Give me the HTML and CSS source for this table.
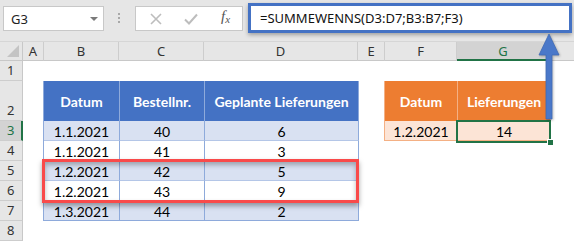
FILE: index.html
```html
<!DOCTYPE html>
<html>
<head>
<meta charset="utf-8">
<link rel="stylesheet" href="styles.css">
</head>
<body>
<div class="app">
  <div class="toolbar">
    <div class="namebox"><span>G3</span><span class="dd"></span></div>
    <div class="dots"><i></i><i></i><i></i></div>
    <div class="fbtns">
      <svg class="ic-x" width="14" height="14" viewBox="0 0 14 14"><path d="M2 2L12 12M12 2L2 12" stroke="#bdbdbd" stroke-width="1.6" fill="none"/></svg>
      <svg class="ic-ok" width="16" height="14" viewBox="0 0 16 14"><path d="M2 7.5L6 11.5L14 2.5" stroke="#bdbdbd" stroke-width="2" fill="none"/></svg>
      <span class="fx">f<sub>x</sub></span>
    </div>
    <div class="formula">=SUMMEWENNS(D3:D7;B3:B7;F3)</div>
  </div>
  <div class="sheet">
    <div class="corner"></div>
    <div class="ch">A</div>
    <div class="ch">B</div>
    <div class="ch">C</div>
    <div class="ch">D</div>
    <div class="ch">E</div>
    <div class="ch">F</div>
    <div class="ch sel">G</div>
    <div class="ch last"></div>

    <div class="rh r1">1</div>
    <div class="rh r2">2</div>
    <div class="rh r3 sel">3</div>
    <div class="rh r4">4</div>
    <div class="rh r5">5</div>
    <div class="rh r6">6</div>
    <div class="rh r7">7</div>
    <div class="rh r8">8</div>

    <div class="tbl blue">
      <div class="th">Datum</div><div class="th">Bestellnr.</div><div class="th">Geplante Lieferungen</div>
      <div class="td band">1.1.2021</div><div class="td band">40</div><div class="td band">6</div>
      <div class="td">1.1.2021</div><div class="td">41</div><div class="td">3</div>
      <div class="td band">1.2.2021</div><div class="td band">42</div><div class="td band">5</div>
      <div class="td">1.2.2021</div><div class="td">43</div><div class="td">9</div>
      <div class="td band">1.3.2021</div><div class="td band">44</div><div class="td band">2</div>
    </div>

    <div class="tbl orange">
      <div class="th">Datum</div><div class="th">Lieferungen</div>
      <div class="td">1.2.2021</div><div class="td">14</div>
    </div>

    <div class="redbox"></div>
    <div class="selbox"><span class="handle"></span></div>
    <svg class="arrow" width="24" height="90" viewBox="0 0 24 90">
      <path d="M12 1L22 22H15V86H9V22H2Z" fill="#4a78c9" stroke="#3f69b5" stroke-width="0.8"/>
    </svg>
  </div>
</div>
</body>
</html>
```

FILE: styles.css
```css
* { box-sizing: border-box; }
html, body { margin: 0; padding: 0; background: #fff; }
.app { width: 574px; height: 242px; overflow: hidden; position: relative; font-family: "Noto Sans", "Open Sans", sans-serif; }

.toolbar { height: 42px; background: #e6e6e6; display: flex; align-items: flex-start; border-bottom: 1px solid #d6d6d6; }
.namebox { margin: 6px 0 0 3px; width: 101px; height: 25px; background: #fff; border: 1px solid #c8c8c8; display: flex; align-items: center; justify-content: space-between; padding: 0 5px 0 7px; font-size: 13px; color: #222; }
.dd { width: 0; height: 0; border-left: 4px solid transparent; border-right: 4px solid transparent; border-top: 4px solid #7a7a7a; }
.dots { margin: 13px 0 0 14px; width: 3px; display: flex; flex-direction: column; gap: 2px; }
.dots i { display: block; width: 2px; height: 2px; background: #a8a8a8; }
.fbtns { margin: 6px 0 0 14px; width: 108px; height: 25px; background: #fff; border: 1px solid #c8c8c8; display: flex; align-items: center; padding-left: 13px; }
.ic-x { margin-right: 20px; }
.ic-ok { margin-right: 22px; }
.fx { font-family: "Liberation Serif", serif; font-style: italic; font-size: 15px; color: #555; line-height: 1; margin-top: -3px; }
.fx sub { font-size: 11px; vertical-align: -2px; }
.formula { margin: 3px 0 0 5px; width: 324px; height: 30px; background: #fff; border: 3px solid #4472c4; box-shadow: 0 2px 4px rgba(0,0,0,0.3); padding: 3px 0 0 9px; font-size: 13px; color: #111; white-space: nowrap; }

.sheet { position: relative; display: grid; grid-template-columns: 23px 21px 75px 85px 154px 27px 72px 93px 1fr; grid-template-rows: 19px 20px 40px repeat(6, 20px); background: #fff; }
.corner { background: #e6e6e6; border-right: 1px solid #c8c8c8; border-bottom: 1px solid #c8c8c8; position: relative; }
.corner::after { content: ""; position: absolute; right: 3px; bottom: 3px; width: 0; height: 0; border-left: 12px solid transparent; border-bottom: 12px solid #c4c4c4; }
.ch { background: #e6e6e6; border-right: 1px solid #cdcdcd; border-bottom: 1px solid #c8c8c8; font-size: 13px; color: #333; display: flex; align-items: center; justify-content: center; }
.ch.last { border-right: none; }
.ch.sel { background: #d3d3d3; color: #217346; border-bottom: 2px solid #217346; }
.rh { grid-column: 1; background: #e6e6e6; border-right: 1px solid #c8c8c8; border-bottom: 1px solid #cdcdcd; font-size: 13px; color: #333; display: flex; align-items: flex-end; padding: 0 0 1px 7px; }
.rh.sel { background: #d3d3d3; color: #217346; border-right: 2px solid #217346; }
.r1 { grid-row: 2; } .r2 { grid-row: 3; } .r3 { grid-row: 4; } .r4 { grid-row: 5; }
.r5 { grid-row: 6; } .r6 { grid-row: 7; } .r7 { grid-row: 8; } .r8 { grid-row: 9; }

.tbl { display: grid; font-family: "Lato", "Noto Sans", sans-serif; font-size: 14px; color: #000; margin-left: -1px; }
.tbl .th { color: #fff; font-weight: bold; display: flex; align-items: center; justify-content: center; }
.tbl .td { display: flex; align-items: center; justify-content: center; padding-top: 1px; }

.blue { grid-column: 3 / 6; grid-row: 3 / 9; grid-template-columns: 76px 85px 154px; grid-template-rows: 40px repeat(5, 20px); border-left: 1px solid #8eaadb; }
.blue .th { background: #4472c4; border-right: 1px solid #8eaadb; }
.blue .td { border-right: 1px solid #8eaadb; border-bottom: 1px solid #b4c6e7; background: #fff; }
.blue .td.band { background: #d9e1f2; }
.blue .td:nth-last-child(-n+3) { border-bottom: 1px solid #8eaadb; }

.orange { grid-column: 7 / 9; grid-row: 3 / 5; grid-template-columns: 73px 93px; grid-template-rows: 40px 20px; border-left: 1px solid #f4b084; }
.orange .th { background: #ed7d31; border-right: 1px solid #f4b084; }
.orange .td { background: #fce4d6; border-right: 1px solid #f4b084; border-bottom: 1px solid #f4b084; }

.redbox { position: absolute; left: 42px; top: 117px; width: 317px; height: 44px; border: 3px solid #f94a4a; box-shadow: 0 3px 5px rgba(0,0,0,0.35), inset 0 3px 5px rgba(0,0,0,0.28); }
.selbox { position: absolute; left: 456px; top: 78px; width: 95px; height: 23px; border: 2px solid #217346; }
.handle { position: absolute; right: -5px; bottom: -5px; width: 7px; height: 7px; background: #217346; border: 1px solid #fff; }
.arrow { position: absolute; left: 537px; top: -9px; filter: drop-shadow(1px 1px 1px rgba(0,0,0,0.25)); }
```
